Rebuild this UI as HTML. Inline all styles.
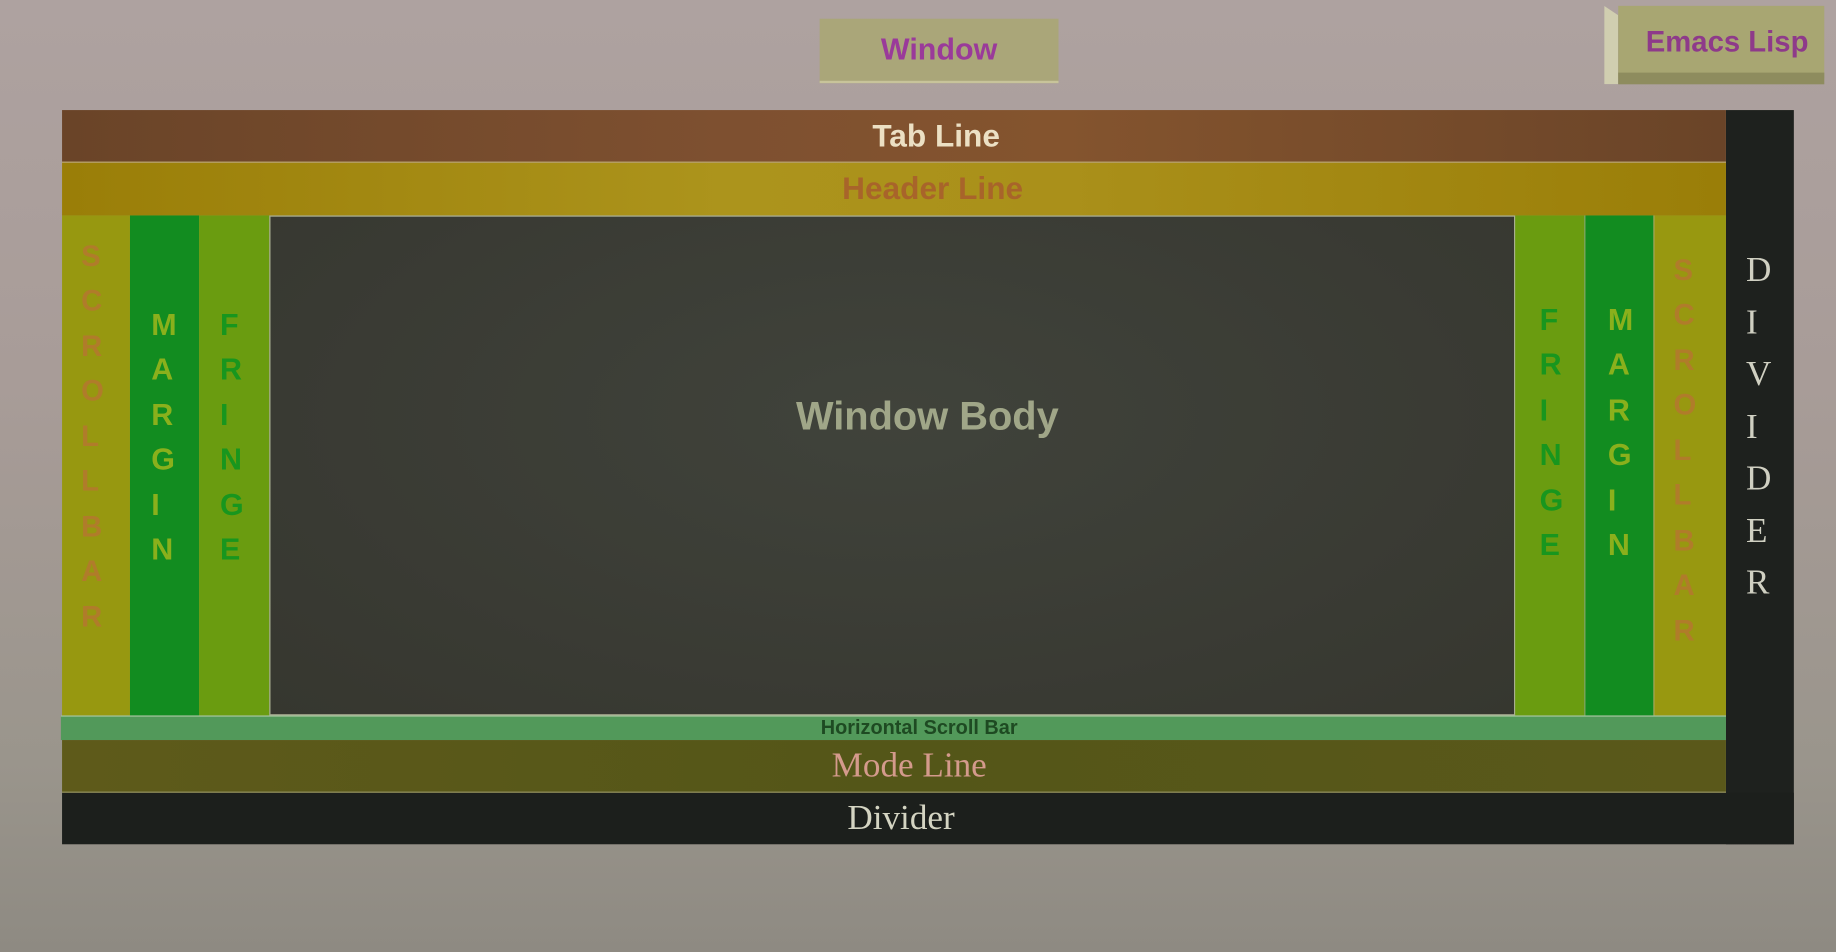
<!DOCTYPE html>
<html><head><meta charset="utf-8"><style>
html,body{margin:0;padding:0;width:1836px;height:952px;overflow:hidden}
body{background:linear-gradient(180deg,#aea2a0 0%,#a89c98 40%,#9a958c 80%,#8e8a82 100%)}
#s{position:absolute;left:0;top:0;width:1568px;height:813px;transform:scale(1.17092,1.17097);transform-origin:0 0;font-family:"Liberation Sans",sans-serif}
.a{position:absolute;box-sizing:border-box}
.c{display:flex;align-items:center;justify-content:center}
.v{display:flex;flex-direction:column;align-items:center;justify-content:center;font-weight:bold;font-size:26px;line-height:38.5px}
.serif{font-family:"Liberation Serif","DejaVu Serif",serif}
</style></head><body><div id="s">
<div class="a c" style="left:700px;top:16px;width:204px;height:55px;background:#aaa679;color:#9a3a9a;font-weight:bold;font-size:26px;border-bottom:2px solid #c8c49a">Window</div>
<div class="a" style="left:1370px;top:5px;width:12px;height:67px;background:#d0ceb0;clip-path:polygon(0 0,100% 8px,100% 100%,0 100%)"></div>
<div class="a c" style="left:1382px;top:5px;width:176px;height:62px;background:#a8a672;color:#8e3a8a;font-weight:bold;font-size:25px;padding-left:10px">Emacs Lisp</div>
<div class="a" style="left:1382px;top:62px;width:176px;height:10px;background:#8e8c5e"></div>

<div class="a" style="left:1474px;top:94px;width:58px;height:627px;background:#1e211e"></div>
<div class="a c serif" style="left:53px;top:677px;width:1479px;height:44px;background:#1c1f1c;color:#d4d4c2;font-size:30px"><span style="position:relative;left:-23px">Divider</span></div>
<div class="a v serif" style="left:1476px;top:210px;width:52px;height:310px;color:#d0d0c2;font-weight:normal;font-size:30px;line-height:44.5px">D<br>I<br>V<br>I<br>D<br>E<br>R</div>

<div class="a c" style="left:53px;top:94px;width:1421px;height:44px;background:linear-gradient(90deg,#6a4428,#7e5030 40%,#84542e 60%,#6a4428);color:#ece0c4;font-weight:bold;font-size:27px"><span style="position:relative;left:36px">Tab Line</span></div>
<div class="a c" style="left:53px;top:138px;width:1421px;height:46px;background:linear-gradient(90deg,#9a7e08,#ac941c 40%,#aa901a 60%,#9a7e08);color:#a8642a;font-weight:bold;font-size:27px;border-top:1px solid #b8a060"><span style="position:relative;left:33px">Header Line</span></div>

<div class="a" style="left:53px;top:184px;width:58px;height:427px;background:#979810"></div>
<div class="a" style="left:111px;top:184px;width:59px;height:427px;background:#128c20"></div>
<div class="a" style="left:170px;top:184px;width:60px;height:427px;background:#6a9c10"></div>
<div class="a" style="left:230px;top:184px;width:1064px;height:427px;background:radial-gradient(ellipse at 50% 40%,#40433b,#393a33 70%,#36372f);border:1px solid #a8ae90"></div>
<div class="a" style="left:1294px;top:184px;width:59px;height:427px;background:#6a9c10"></div>
<div class="a" style="left:1353px;top:184px;width:60px;height:427px;background:#128c20;border-left:1px solid #8aa860;border-right:1px solid #a8a860"></div>
<div class="a" style="left:1413px;top:184px;width:61px;height:427px;background:#989810"></div>

<div class="a c" style="left:230px;top:330px;width:1124px;height:52px;color:#a0a688;font-weight:bold;font-size:34px"><span style="position:relative;left:0px">Window Body</span></div>

<div class="a v" style="left:53px;top:200px;width:52px;height:346px;color:#b07c2a;font-weight:bold;font-size:25px">S<br>C<br>R<br>O<br>L<br>L<br>B<br>A<br>R</div>
<div class="a v" style="left:111px;top:258px;width:58px;height:230px;color:#8ab01c">M<br>A<br>R<br>G<br>I<br>N</div>
<div class="a v" style="left:170px;top:258px;width:56px;height:230px;color:#18961e">F<br>R<br>I<br>N<br>G<br>E</div>
<div class="a v" style="left:1297px;top:254px;width:56px;height:230px;color:#18961e">F<br>R<br>I<br>N<br>G<br>E</div>
<div class="a v" style="left:1355px;top:254px;width:58px;height:230px;color:#8ab01c">M<br>A<br>R<br>G<br>I<br>N</div>
<div class="a v" style="left:1413px;top:212px;width:52px;height:346px;color:#b07c2a;font-weight:bold;font-size:25px">S<br>C<br>R<br>O<br>L<br>L<br>B<br>A<br>R</div>

<div class="a c" style="left:52px;top:611px;width:1422px;height:21px;background:#52995a;color:#1e4a22;font-weight:bold;font-size:17px;border-top:1px solid #a8c8a0"><span style="position:relative;left:22px">Horizontal Scroll Bar</span></div>
<div class="a c serif" style="left:53px;top:632px;width:1421px;height:45px;background:linear-gradient(90deg,#5e5a1a,#545618 50%,#5a581a);color:#d49a8c;font-size:30px;border-bottom:1px solid #8a8a50"><span style="position:relative;left:13px">Mode Line</span></div>
</div></body></html>
